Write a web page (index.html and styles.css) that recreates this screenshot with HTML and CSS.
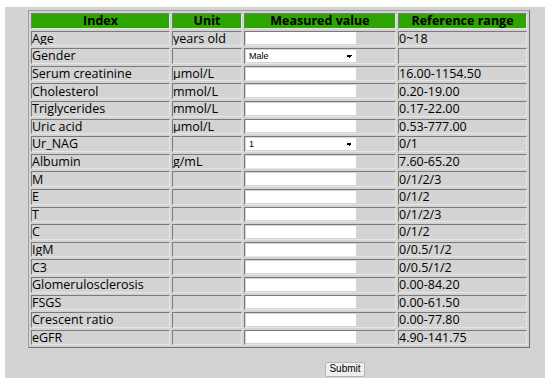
FILE: index.html
```html
<!DOCTYPE html>
<html>
<head>
    <title>Index calculator</title>
    <link rel="stylesheet" href="styles.css">
</head>
<body>
    <div id="panel">
        <table id="form-table">
            <colgroup>
                <col class="col-index">
                <col class="col-unit">
                <col class="col-value">
                <col class="col-range">
            </colgroup>
            <tr>
                <th>Index</th>
                <th>Unit</th>
                <th>Measured value</th>
                <th>Reference range</th>
            </tr>
            <tr><td>Age</td><td>years old</td><td><input type="text"></td><td>0~18</td></tr>
            <tr><td>Gender</td><td></td><td><select><option>Male</option><option>Female</option></select></td><td></td></tr>
            <tr><td>Serum creatinine</td><td>μmol/L</td><td><input type="text"></td><td>16.00-1154.50</td></tr>
            <tr><td>Cholesterol</td><td>mmol/L</td><td><input type="text"></td><td>0.20-19.00</td></tr>
            <tr><td>Triglycerides</td><td>mmol/L</td><td><input type="text"></td><td>0.17-22.00</td></tr>
            <tr><td>Uric acid</td><td>μmol/L</td><td><input type="text"></td><td>0.53-777.00</td></tr>
            <tr><td>Ur_NAG</td><td></td><td><select><option>1</option><option>0</option></select></td><td>0/1</td></tr>
            <tr><td>Albumin</td><td>g/mL</td><td><input type="text"></td><td>7.60-65.20</td></tr>
            <tr><td>M</td><td></td><td><input type="text"></td><td>0/1/2/3</td></tr>
            <tr><td>E</td><td></td><td><input type="text"></td><td>0/1/2</td></tr>
            <tr><td>T</td><td></td><td><input type="text"></td><td>0/1/2/3</td></tr>
            <tr><td>C</td><td></td><td><input type="text"></td><td>0/1/2</td></tr>
            <tr><td>IgM</td><td></td><td><input type="text"></td><td>0/0.5/1/2</td></tr>
            <tr><td>C3</td><td></td><td><input type="text"></td><td>0/0.5/1/2</td></tr>
            <tr><td>Glomerulosclerosis</td><td></td><td><input type="text"></td><td>0.00-84.20</td></tr>
            <tr><td>FSGS</td><td></td><td><input type="text"></td><td>0.00-61.50</td></tr>
            <tr><td>Crescent ratio</td><td></td><td><input type="text"></td><td>0.00-77.80</td></tr>
            <tr><td>eGFR</td><td></td><td><input type="text"></td><td>4.90-141.75</td></tr>
        </table>
        <div class="actions">
            <button type="button" id="submit-button">Submit</button>
        </div>
    </div>
</body>
</html>
```

FILE: styles.css
```css
body {
    margin: 7px 5px 4px 5px;
    background-color: #fff;
    font-family: "Open Sans", Arial, sans-serif;
    font-size: 12.5px;
}

#panel {
    background-color: #d3d3d3;
    height: 371px;
    padding: 3px 15px 0 23px;
    box-sizing: border-box;
}

#form-table {
    border: 1px solid;
    border-color: #a0a0a0 #6e6e6e #6e6e6e #a0a0a0;
    border-spacing: 2px;
    width: 502px;
    table-layout: fixed;
}

.col-index { width: 139px; }
.col-unit { width: 70px; }
.col-value { width: 152px; }

th, td {
    box-sizing: border-box;
    border: 1px solid;
    border-color: #7a7a7a #e6e6e6 #e6e6e6 #7a7a7a;
    padding: 0;
    height: 15.6px;
    line-height: 13px;
    white-space: nowrap;
    overflow: hidden;
    text-align: left;
}

th {
    background-color: #2da500;
    text-align: center;
    font-weight: bold;
    font-size: 12.5px;
}

input[type="text"], select {
    display: block;
    box-sizing: border-box;
    width: 110px;
    height: 12px;
    margin: 0 0 0 1px;
    padding: 0 3px;
    border: none;
    background-color: #fff;
    font-family: Arial, sans-serif;
    font-size: 9px;
    line-height: 12px;
    outline: none;
}

select {
    appearance: none;
    background-image: linear-gradient(45deg, transparent 50%, #000 50%), linear-gradient(135deg, #000 50%, transparent 50%);
    background-position: 100px 5px, 103px 5px;
    background-size: 3px 3px, 3px 3px;
    background-repeat: no-repeat;
}

.actions {
    text-align: center;
    padding: 11px 0 0 132px;
}

#submit-button {
    display: inline-block;
    font-family: Arial, sans-serif;
    font-size: 10px;
    line-height: 12px;
    padding: 0;
    height: 15px;
    width: 40px;
    background-color: #efefef;
    border: 1px solid #b5b5b5;
    border-radius: 2px;
}
```
